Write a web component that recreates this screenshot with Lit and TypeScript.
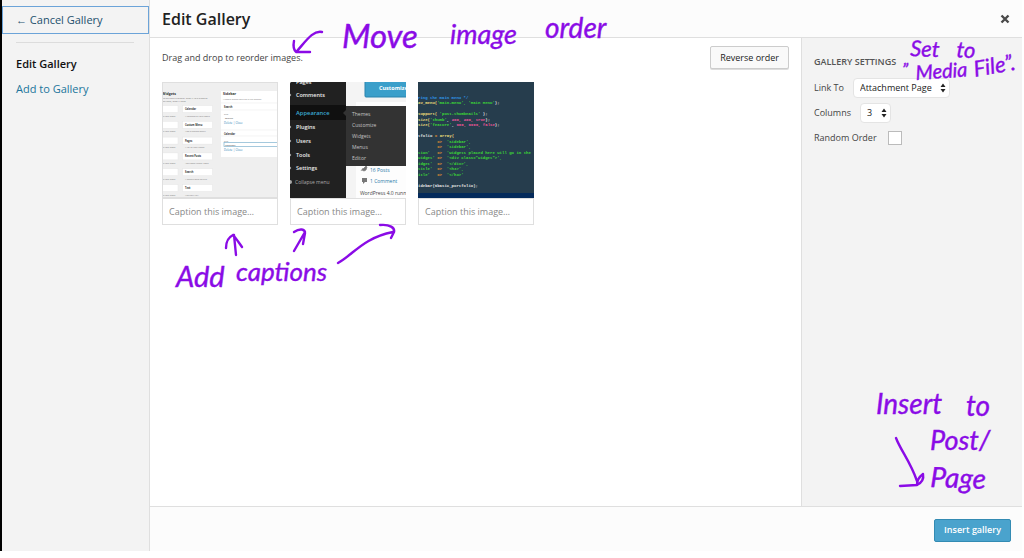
import { LitElement, html, svg, css } from "lit";
import { customElement, property } from "lit/decorators.js";

type Word = [text: string, x: number, y: number, size: number, angle?: number];

const INK = "#8a0be6";

/** A pen annotation: words and arrows laid over the dialog. */
@customElement("pen-note")
class PenNote extends LitElement {
  @property({ type: Number }) width = 100;
  @property({ type: Number }) height = 100;
  @property({ attribute: false }) words: Word[] = [];
  @property({ attribute: false }) strokes: string[] = [];

  static styles = css`
    :host { display: block; pointer-events: none; }
    svg { display: block; overflow: visible; }
    text { font-family: Lato, "Open Sans", sans-serif; font-style: italic; stroke-width: .4px; }
  `;

  render() {
    return html`<svg width=${this.width} height=${this.height}>
      ${this.words.map(([t, x, y, size, angle = 0]) => svg`
        <text x=${x} y=${y} font-size=${size} fill=${INK} stroke=${INK}
          transform="rotate(${angle} ${x} ${y})">${t}</text>`)}
      ${this.strokes.map((d) => svg`
        <path d=${d} fill="none" stroke=${INK} stroke-width="2.400" stroke-linecap="round" stroke-linejoin="round"/>`)}
    </svg>`;
  }
}

const widgetNames = ["Calendar", "Custom Menu", "Pages", "Recent Posts", "Search", "Text"];
const widgetHints = ["A calendar of your posts", "Add a custom menu", "A list of your Pages", "Your most recent Posts", "A search form for site", "Arbitrary text"];

const widgetsThumb = svg`
  <rect width="116" height="116" fill="#efefef"/>
  <text x="0" y="13" font-size="3.500" font-weight="700" fill="#333">Widgets</text>
  <text x="0" y="17" font-size="2.500" fill="#777">To activate a widget drag it to a sidebar</text>
  <text x="0" y="20" font-size="2.500" fill="#777">settings, drag it back</text>
  ${widgetNames.map((name, i) => svg`
    <rect x="-1" y=${23.5 + i * 15.8} width="17" height="7" fill="#fff" stroke="#e6e6e6" stroke-width=".5"/>
    <rect x="20.500" y=${23.5 + i * 15.8} width="30" height="7" fill="#fff" stroke="#e6e6e6" stroke-width=".5"/>
    <text x="23" y=${28 + i * 15.8} font-size="2.500" font-weight="700" fill="#333">${name}</text>
    <text x="23" y=${34.5 + i * 15.8} font-size="2.200" fill="#777">${widgetHints[i]}</text>
    <text x="0" y=${34.5 + i * 15.8} font-size="2.200" fill="#777">of your posts</text>`)}
  <rect x="59" y="9" width="57" height="66" fill="#fff"/>
  <text x="61" y="13" font-size="3.500" font-weight="700" fill="#333">Sidebar</text>
  <text x="61" y="17.500" font-size="2.200" fill="#777">Widgets placed here go in the sidebar</text>
  <path d="M59 21H116M59 28H116M59 48H116M59 54H116" stroke="#ececec" stroke-width=".6"/>
  <text x="62" y="25.500" font-size="2.500" font-weight="700" fill="#333">Search</text>
  <text x="62" y="32.500" font-size="2.200" fill="#666">Title</text>
  <text x="63" y="36.500" font-size="2.500" fill="#444">Search</text>
  <text x="62" y="42" font-size="2.800" fill="#2a83b4">Delete | Close</text>
  <text x="62" y="52.500" font-size="2.500" font-weight="700" fill="#333">Calendar</text>
  <text x="62" y="59.500" font-size="2.200" fill="#666">Title</text>
  <rect x="62" y="60.500" width="54" height="4" fill="#fff" stroke="#7fb2cf" stroke-width=".7"/>
  <text x="63" y="63.500" font-size="2.500" fill="#444">Calendar</text>
  <text x="62" y="69" font-size="2.800" fill="#2a83b4">Delete | Close</text>
  <rect x=".5" y=".5" width="115" height="115" fill="none" stroke="#dfdfdf"/>`;

const menuRows: [string, number][] = [["Pages", 2], ["Comments", 15], ["Plugins", 47], ["Users", 61], ["Tools", 75], ["Settings", 88]];

const menuThumb = svg`
  <rect width="116" height="116" fill="#f4f4f4"/>
  <rect x="66" y="20" width="50" height="96" fill="#fdfdfd"/>
  <rect x="75" y="-3" width="44" height="18" rx="1" fill="#3b9fca" stroke="#2a83ad"/>
  <text x="89" y="8" font-size="5.500" font-weight="700" fill="#fff">Customize</text>
  <rect width="56" height="116" fill="#212121"/>
  <rect y="23" width="56" height="15" fill="#101010"/>
  ${menuRows.map(([t, y]) => svg`<text x="6" y=${y} font-size="5.500" font-weight="600" fill="#eee">${t}</text>
    <circle cx="0" cy=${y - 2} r="1.200" fill="#999"/>`)}
  <text x="6" y="33" font-size="5.800" font-weight="600" fill="#3aa8d2">Appearance</text>
  <text x="5" y="102" font-size="5" fill="#aaa">Collapse menu</text>
  <circle cx="0" cy="100" r="2" fill="#aaa"/>
  <rect x="56" y="24" width="60" height="60" fill="#333"/>
  <path d="M56 28l-3 3 3 3z" fill="#333"/>
  ${["Themes", "Customize", "Widgets", "Menus", "Editor"].map((t, i) => svg`
    <text x="62" y=${34 + i * 11} font-size="5" fill="#c4c4c4">${t}</text>`)}
  <path d="M72 88l4-4 1 1-1 3-2 1zM73 86l-2 3" fill="#777" stroke="#777" stroke-width=".7"/>
  <text x="80" y="89.500" font-size="5" fill="#2a7aa8">16 Posts</text>
  <path d="M72 96h5v4h-2l-2 2v-2h-1z" fill="#777"/>
  <text x="80" y="101" font-size="5" fill="#2a7aa8">1 Comment</text>
  <text x="70" y="113" font-size="5" fill="#444">WordPress 4.0 runn</text>`;

const W = "#e6e6e6", G = "#3ddb35", P = "#f0569a", O = "#f39a2b", Y = "#f0df7a", B = "#2f95e8";
type Line = [y: number, ...parts: [text: string, fill: string][]];
const code: Line[] = [
  [17, ["ring the main menu */", B]],
  [22, ["av_menu(", Y], ["'main-menu', 'Main Menu'", G], [");", W]],
  [33, ["support( ", Y], ["'post-thumbnails'", G], [" );", W]],
  [39, ["size(", Y], ["'thumb'", G], [", ", W], ["200, 200, true", P], [");", W]],
  [44, ["size(", Y], ["'feature'", G], [", ", W], ["960, 9999, false", P], [");", W]],
  [55, ["tfolio ", W], ["= ", O], ["array(", Y]],
  [60.5, ["        ", W], ["=>  ", O], ["'Sidebar',", G]],
  [66, ["        ", W], ["=>  ", O], ["'sidebar',", G]],
  [71.5, ["tion'   ", G], ["=>  ", O], ["'Widgets placed here will go in the", G]],
  [77, ["widget' ", G], ["=>  ", O], ["'<div class=\"widget\">',", G]],
  [82.5, ["idget'  ", G], ["=>  ", O], ["'</div>',", G]],
  [88, ["title'  ", G], ["=>  ", O], ["'<h3>',", G]],
  [93.5, ["itle'   ", G], ["=>  ", O], ["'</h3>'", G]],
  [105, ["idebar($basic_portfolio);", W]],
];

const codeThumb = svg`
  <rect width="116" height="116" fill="#263d4d"/>
  <rect y="111" width="116" height="5" fill="#052b5b"/>
  ${code.map(([y, ...parts]) => svg`<text class="mono" x="0" y=${y} font-size="4" font-weight="700">${parts.map(([t, fill]) => svg`<tspan fill=${fill}>${t}</tspan>`)}</text>`)}`;

const shots = [
  { label: "Widgets screen", art: widgetsThumb },
  { label: "Appearance menu", art: menuThumb },
  { label: "Theme code", art: codeThumb },
];

const spinner = html`<svg class="spinner" width="6" height="10" viewBox="0 0 6 10" aria-hidden="true">
  <path d="M3 0.500L5.500 4H0.500zM3 9.500L0.500 6H5.500z" fill="#222"/></svg>`;

@customElement("app-root")
class AppRoot extends LitElement {
  static styles = css`
    :host {
      display: block; box-sizing: border-box; min-height: 100vh; padding: 0 2px 7px 0;
      background: #fff; color: #444;
      font: 9px/16px "Open Sans", sans-serif;
    }
    * { box-sizing: border-box; }
    .dialog {
      display: grid; grid-template-columns: 148px minmax(0, 1fr);
      min-height: calc(100vh - 7px); border-left: 2px solid #000;
    }
    .menu {
      background: #f3f3f3; border-right: 1px solid #dfdfdf; padding-top: 6px;
      font-size: 11px;
    }
    .cancel {
      display: block; width: 100%; height: 28px; padding: 0 0 0 13px; text-align: left;
      font: inherit; color: #23506d; background: none; border: 1px solid #6ba3d8; outline: 0;
    }
    .menu hr { margin: 8px 15px 13px 14px; border: 0; border-top: 1px solid #dcdcdc; }
    .menu a { display: block; padding: 0 14px; margin-bottom: 9px; color: #21759b; text-decoration: none; }
    .menu .current { color: #111; font-weight: 600; }
    .main { display: flex; flex-direction: column; position: relative; }
    header {
      display: flex; justify-content: space-between; align-items: center;
      height: 38px; padding: 0 12px; background: #fcfcfc; border-bottom: 1px solid #dfdfdf;
    }
    h1 { margin: 0; font-size: 16px; line-height: 24px; font-weight: 600; color: #222; }
    .close { display: flex; padding: 0; border: 0; background: none; }
    .body { flex: 1; display: grid; grid-template-columns: minmax(0, 1fr) 221px; }
    .gallery { padding: 8px 12px; }
    .toolbar { display: flex; justify-content: space-between; align-items: center; }
    .toolbar p { margin: 0; }
    .button {
      height: 23px; padding: 0 9px; font: inherit; color: #222; background: #f9f9f9;
      border: 1px solid #ccc; border-radius: 2px; box-shadow: 0 1px 0 #ddd;
    }
    .shots { display: flex; flex-wrap: wrap; gap: 12px; margin: 13px 0 0; padding: 0; list-style: none; }
    .shot { width: 116px; }
    .shot svg { display: block; width: 100%; }
    .shot text { font-family: "Open Sans", sans-serif; }
    .shot .mono { font-family: "Liberation Mono", monospace; white-space: pre; }
    .caption {
      display: block; width: 100%; height: 27px; padding: 0 6px; font: inherit;
      color: #444; background: #fff; border: 1px solid #dfdfdf; border-radius: 0;
    }
    .caption::placeholder { color: #888; opacity: 1; }
    .settings { background: #f3f3f3; border-left: 1px solid #dfdfdf; padding: 16px 12px; }
    h2 { margin: 0 0 5px; font-size: 9px; line-height: 16px; font-weight: 600; color: #555; }
    .row { display: flex; align-items: center; height: 25px; gap: 9px; }
    .row.wide { gap: 11px; }
    .pick { position: relative; display: flex; align-items: center; }
    select {
      appearance: none; height: 20px; padding: 0 17px 0 6px; font: inherit;
      color: #222; background: #fff; border: 1px solid #e4e4e4; border-radius: 4px;
    }
    .spinner { position: absolute; right: 4px; pointer-events: none; }
    .tick {
      appearance: none; width: 14px; height: 14px; margin: 0; background: #fff; border: 1px solid #bbb;
    }
    footer {
      display: flex; justify-content: flex-end; align-items: center; height: 45px; padding: 2px 11px 0;
      background: #fcfcfc; border-top: 1px solid #dfdfdf;
    }
    .primary {
      height: 23px; padding: 0 9px; font: inherit; font-weight: 600; color: #fff;
      background: #4aa3cd; border: 1px solid #338bb3; border-radius: 2px;
    }
    pen-note { position: absolute; }
    .order { left: 142px; top: 10px; }
    .captions { left: 22px; top: 220px; }
    .target { right: 0; top: 34px; }
    .insert { right: 30px; bottom: 50px; }
  `;

  render() {
    return html`<div class="dialog">
      <nav class="menu">
        <button class="cancel">← Cancel Gallery</button>
        <hr />
        <a class="current" href="#edit">Edit Gallery</a>
        <a href="#add">Add to Gallery</a>
      </nav>
      <div class="main">
        <header>
          <h1>Edit Gallery</h1>
          <button class="close" aria-label="Close">
            <svg width="10" height="10" viewBox="0 0 10 10"><path d="M1.500 1.500L8.500 8.500M8.500 1.500L1.500 8.500" stroke="#4a4a4a" stroke-width="2.400"/></svg>
          </button>
        </header>
        <div class="body">
          <section class="gallery">
            <div class="toolbar">
              <p>Drag and drop to reorder images.</p>
              <button class="button">Reverse order</button>
            </div>
            <ul class="shots">
              ${shots.map((s) => html`<li class="shot">
                <svg viewBox="0 0 116 116" role="img" aria-label=${s.label}>${s.art}</svg>
                <input class="caption" type="text" placeholder="Caption this image…" aria-label="Caption for ${s.label}" />
              </li>`)}
            </ul>
          </section>
          <aside class="settings">
            <h2>GALLERY SETTINGS</h2>
            <div class="row"><label for="link">Link To</label>
              <span class="pick"><select id="link"><option>Attachment Page</option></select>${spinner}</span></div>
            <div class="row"><label for="cols">Columns</label>
              <span class="pick"><select id="cols"><option>3</option></select>${spinner}</span></div>
            <div class="row wide"><label for="rand">Random Order</label>
              <input class="tick" id="rand" type="checkbox" /></div>
          </aside>
        </div>
        <footer><button class="primary">Insert gallery</button></footer>

        <pen-note class="order" width="325" height="50"
          .words=${[["Move", 50, 38, 33], ["image", 158, 34, 27], ["order", 253, 28, 28]] as Word[]}
          .strokes=${["M30 22C21 20 14 31 5 41M2 31C1 36 2 40 4 42L18 42"]}></pen-note>
        <pen-note class="captions" width="235" height="75"
          .words=${[["Add", 4, 67, 29], ["captions", 64, 61, 26]] as Word[]}
          .strokes=${["M54 28C54 20 57 17 61 15M61 15C64 18 67 23 70 27M62 15L64 35", "M122 31L133 12M122 12C128 8 133 9 133 13L131 24", "M166 43C182 34 191 18 221 12M208 5C218 4 223 8 222 12L219 18"]}></pen-note>
        <pen-note class="target" width="122" height="50"
          .words=${[["Set", 10, 22, 22, 2], ["to", 56, 23, 22, 4], ["”", 2, 42, 18], ["Media", 16, 46, 20, -4], ["File”.", 75, 43, 22, -10]] as Word[]}></pen-note>
        <pen-note class="insert" width="116" height="112"
          .words=${[["Insert", 0, 25, 28], ["to", 90, 27, 28], ["Post/", 54, 61, 27], ["Page", 54, 98, 28, 2]] as Word[]}
          .strokes=${["M20 49C25 62 34 72 41 92M24 97L41 96C45 94 48 90 47 85C43 88 41 92 41 96"]}></pen-note>
      </div>
    </div>`;
  }
}
